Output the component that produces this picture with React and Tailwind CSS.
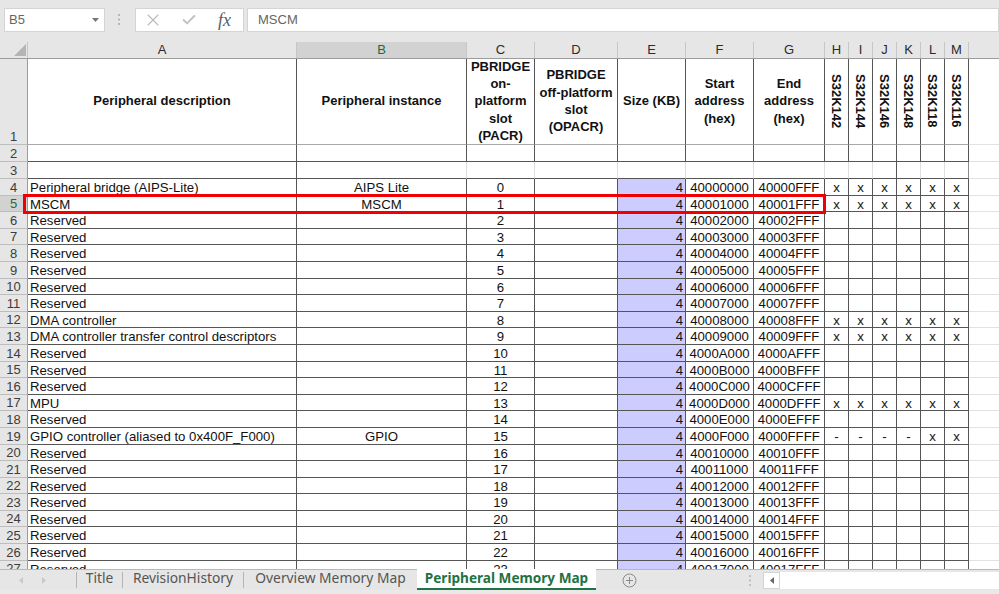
import { X, Check } from 'lucide-react';

const GRID = 'grid grid-cols-[28px_269px_170px_68px_83px_68px_68px_71px_repeat(6,24px)_1fr]';
const COLS = ['A', 'B', 'C', 'D', 'E', 'F', 'G', 'H', 'I', 'J', 'K', 'L', 'M'];
const CHIPS = ['S32K142', 'S32K144', 'S32K146', 'S32K148', 'S32K118', 'S32K116'];

const ALL = ['x', 'x', 'x', 'x', 'x', 'x'];
const NONE = ['', '', '', '', '', ''];

// rows 4 and up, slot number is the index
const NAMED = {
  0: ['Peripheral bridge (AIPS-Lite)', 'AIPS Lite', ALL],
  1: ['MSCM', 'MSCM', ALL],
  8: ['DMA controller', '', ALL],
  9: ['DMA controller transfer control descriptors', '', ALL],
  13: ['MPU', '', ALL],
  15: ['GPIO controller (aliased to 0x400F_F000)', 'GPIO', ['-', '-', '-', '-', 'x', 'x']],
};

const rows = Array.from({ length: 24 }, (_, slot) => {
  const [desc, inst, chips] = NAMED[slot] || ['Reserved', '', NONE];
  const hex = (0x40000 + slot).toString(16).toUpperCase();
  return { num: slot + 4, slot, desc, inst, chips, start: hex + '000', end: hex + 'FFF' };
});

function RowHead({ num, active, className = '' }) {
  return (
    <div
      className={`flex items-end justify-center border-r border-b border-r-[#9c9c9c] border-b-[#bdbdbd] font-['Liberation_Sans',sans-serif] text-[13px] leading-[14px] ${
        active ? 'bg-[#d2d2d2] text-[#1f6b41]' : 'bg-[#e6e6e6] text-[#3c3c3c]'
      } ${className}`}
    >
      {num}
    </div>
  );
}

function Toolbar() {
  return (
    <div className="h-[42px] shrink-0 bg-[#e6e6e6] pt-2 pl-1 flex items-start">
      <div className="w-[101px] h-6 bg-white border border-[#d4d4d4] flex items-center justify-between pl-[4px] pr-[5px]">
        <span className="font-['Liberation_Sans',sans-serif] text-[13px] text-[#666]">B5</span>
        <svg width="7" height="4" viewBox="0 0 7 4">
          <path d="M0 0h7L3.5 4z" fill="#777" />
        </svg>
      </div>
      <svg className="ml-[12px] mt-[5px]" width="4" height="13" viewBox="0 0 4 13">
        <circle cx="2" cy="2" r="1" fill="#a8a8a8" />
        <circle cx="2" cy="6.5" r="1" fill="#a8a8a8" />
        <circle cx="2" cy="11" r="1" fill="#a8a8a8" />
      </svg>
      <div className="ml-[14px] w-[109px] h-6 bg-white border border-[#d4d4d4] flex items-center">
        <X className="ml-[7px] w-5 h-5 text-[#bcbcbc]" strokeWidth={1.4} />
        <Check className="ml-[18px] w-4 h-4 text-[#c2c2c2]" strokeWidth={3} />
        <span className="ml-[21px] font-['Liberation_Serif',serif] italic text-[18px] leading-[20px] text-[#5e5e5e]">fx</span>
      </div>
      <div className="ml-[3px] flex-1 h-6 bg-white border border-[#d4d4d4] flex items-center pl-[10px]">
        <span className="font-['Liberation_Sans',sans-serif] text-[13px] text-[#666]">MSCM</span>
      </div>
    </div>
  );
}

function ColumnHeads() {
  return (
    <div className={`${GRID} h-[17px] shrink-0 bg-[#e6e6e6] border-b border-[#9c9c9c]`}>
      <div className="relative border-r border-[#c6c6c6]">
        <svg className="absolute right-[1px] bottom-[2px]" width="12" height="12" viewBox="0 0 12 12">
          <path d="M12 0v12H0z" fill="#b4b4b4" />
        </svg>
      </div>
      {COLS.map((c) => (
        <div
          key={c}
          className={`flex items-center justify-center border-r border-[#c6c6c6] font-['Liberation_Sans',sans-serif] text-[13px] leading-[16px] ${
            c === 'B' ? 'bg-[#d2d2d2] text-[#1f6b41]' : 'text-[#2b2b2b]'
          }`}
        >
          {c}
        </div>
      ))}
      <div />
    </div>
  );
}

const headCell = 'flex items-center justify-center text-center pb-px border-r border-b border-r-[#555] border-b-[#a8a8a8] font-bold text-[13px] leading-[17.3px]';

function TitleRow() {
  return (
    <div className={`${GRID} grid-rows-[86px] h-[86px]`}>
      <RowHead num={1} />
      <div className={headCell}>Peripheral description</div>
      <div className={headCell}>Peripheral instance</div>
      <div className={headCell}>PBRIDGE<br />on-<br />platform<br />slot<br />(PACR)</div>
      <div className={headCell}>PBRIDGE<br />off-platform<br />slot<br />(OPACR)</div>
      <div className={headCell}>Size (KB)</div>
      <div className={headCell}>Start<br />address<br />(hex)</div>
      <div className={headCell}>End<br />address<br />(hex)</div>
      {CHIPS.map((c) => (
        <div key={c} className={headCell}>
          <span className="[writing-mode:vertical-rl]">{c}</span>
        </div>
      ))}
      <div className="border-b border-[#e2e2e2]" />
    </div>
  );
}

function BlankRows() {
  return (
    <>
      <div className={`${GRID} h-[17px]`}>
        <RowHead num={2} />
        {COLS.map((c) => (
          <div key={c} className="border-r border-b border-[#555]" />
        ))}
        <div className="border-b border-[#e2e2e2]" />
      </div>
      <div className={`${GRID} h-[17px]`}>
        <RowHead num={3} />
        {COLS.map((c) => (
          <div
            key={c}
            className={`border-b border-b-[#555] border-r ${
              c === 'A' || c === 'J' ? 'border-r-[#555]' : c === 'M' ? 'border-r-[#8c8c8c]' : 'border-r-[#dedede]'
            }`}
          />
        ))}
        <div className="border-b border-[#e2e2e2]" />
      </div>
    </>
  );
}

function DataRow({ row }) {
  const cell = 'border-r border-b border-[#555] whitespace-nowrap overflow-hidden leading-[15px] pt-px';
  return (
    <div className={`${GRID} h-[16.6px]`}>
      <RowHead num={row.num} active={row.num === 5} />
      <div className={`${cell} pl-[2px]`}>{row.desc}</div>
      <div className={`${cell} text-center`}>{row.inst}</div>
      <div className={`${cell} text-center`}>{row.slot}</div>
      <div className={cell} />
      <div className={`${cell} bg-[#ccccff] text-right pr-[2px]`}>4</div>
      <div className={`${cell} text-center`}>{row.start}</div>
      <div className={`${cell} text-center`}>{row.end}</div>
      {row.chips.map((v, i) => (
        <div key={i} className={`${cell} text-center`}>
          {v}
        </div>
      ))}
      <div className="border-b border-[#e2e2e2]" />
    </div>
  );
}

function TabSep() {
  return <div className="w-px h-4 bg-[#b4b4b4] self-center shrink-0" />;
}

function Tab({ label, width }) {
  return (
    <div className={`${width} shrink-0 h-full flex items-center justify-center pb-[3px] text-[13.8px] text-[#555]`}>
      {label}
    </div>
  );
}

function TabBar() {
  return (
    <div className="h-[21px] shrink-0 bg-[#e6e6e6] border-t border-[#b8b8b8] flex items-stretch font-['Noto_Sans',sans-serif]">
      <div className="w-[76px] shrink-0 flex items-center pl-[19px] gap-[19px]">
        <svg width="4" height="7" viewBox="0 0 4 7">
          <path d="M4 0v7L0 3.5z" fill="#c9c9c9" />
        </svg>
        <svg width="4" height="7" viewBox="0 0 4 7">
          <path d="M0 0v7l4-3.5z" fill="#c9c9c9" />
        </svg>
      </div>
      <TabSep />
      <Tab label="Title" width="w-[45px]" />
      <TabSep />
      <Tab label="RevisionHistory" width="w-[120px]" />
      <TabSep />
      <Tab label="Overview Memory Map" width="w-[173px]" />
      <div className="w-[179px] shrink-0 -mt-px bg-white border-b-2 border-[#217346] flex items-center justify-center text-[13.6px] font-bold text-[#1f7244]">
        Peripheral Memory Map
      </div>
      <div className="w-[167px] shrink-0 flex items-center">
        <svg className="ml-[26px]" width="15" height="15" viewBox="0 0 15 15" fill="none" stroke="#8a8a8a">
          <circle cx="7.5" cy="7.5" r="6.5" />
          <path d="M7.5 4v7M4 7.5h7" />
        </svg>
        <svg className="ml-[111px]" width="4" height="13" viewBox="0 0 4 13">
          <circle cx="2" cy="2" r="1" fill="#b4b4b4" />
          <circle cx="2" cy="6.5" r="1" fill="#b4b4b4" />
          <circle cx="2" cy="11" r="1" fill="#b4b4b4" />
        </svg>
      </div>
      <div className="flex-1 flex items-center">
        <div className="w-[17px] h-[17px] bg-white border border-[#d4d4d4] flex items-center justify-center">
          <svg width="4" height="7" viewBox="0 0 4 7">
            <path d="M4 0v7L0 3.5z" fill="#666" />
          </svg>
        </div>
        <div className="flex-1 h-[17px] bg-white" />
      </div>
    </div>
  );
}

export default function App() {
  return (
    <div className="relative w-[999px] h-[594px] overflow-hidden flex flex-col bg-white text-[13.2px] text-[#111] font-['Liberation_Sans',sans-serif]">
      <Toolbar />
      <ColumnHeads />
      <div className="flex-1 min-h-0 overflow-hidden">
        <TitleRow />
        <BlankRows />
        {rows.map((row) => (
          <DataRow key={row.num} row={row} />
        ))}
      </div>
      <TabBar />
      <div className="h-[4px] shrink-0 bg-[#e9e9e9]" />
      {/* red highlight around row 5 */}
      <div className="absolute left-[23px] top-[194px] w-[803px] h-[20px] border-[3px] border-[#f00000] pointer-events-none" />
    </div>
  );
}
